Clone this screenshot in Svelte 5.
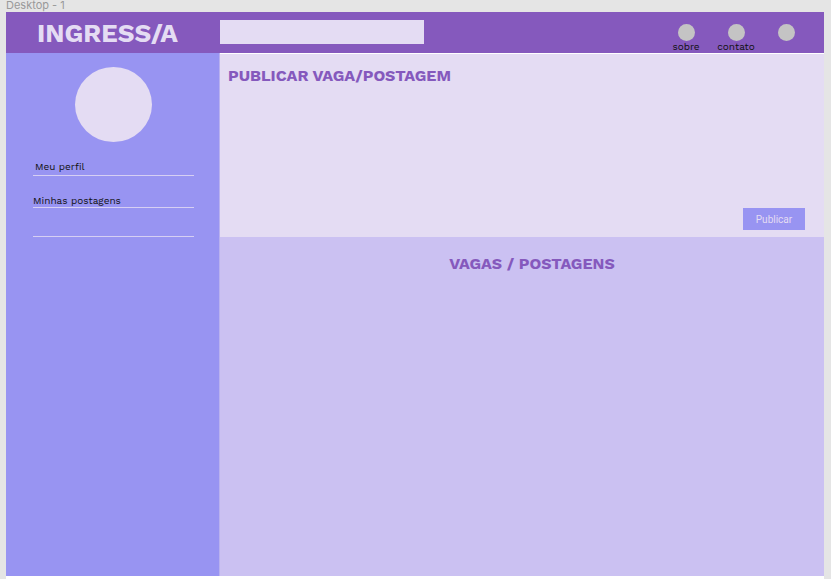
<script>
  let query = $state('');
</script>

<div class="canvas">
  <div class="frame-name">Desktop - 1</div>
  <div class="frame">
    <header>
      <h1>INGRESS/A</h1>
      <input class="search" type="search" aria-label="Buscar" bind:value={query} />
      <nav class="top-nav">
        <a href="#sobre"><span class="dot"></span>sobre</a>
        <a href="#contato"><span class="dot"></span>contato</a>
        <a href="#conta" aria-label="Conta"><span class="dot"></span></a>
      </nav>
    </header>
    <div class="body">
      <aside>
        <div class="avatar"></div>
        <nav class="menu">
          <a class="profile" href="#perfil">Meu perfil</a>
          <a class="posts" href="#postagens">Minhas postagens</a>
          <div class="blank"></div>
        </nav>
      </aside>
      <main>
        <section class="publish">
          <h2>PUBLICAR VAGA/POSTAGEM</h2>
          <button type="button">Publicar</button>
        </section>
        <section class="feed">
          <h2>VAGAS / POSTAGENS</h2>
        </section>
      </main>
    </div>
  </div>
</div>

<style>
  :global(body) {
    margin: 0;
    background: #e5e5e5;
  }
  .canvas {
    box-sizing: border-box;
    min-height: 100vh;
    padding: 0 7px 0 6px;
    display: flex;
    flex-direction: column;
    font-family: "Work Sans", Inter, "Liberation Sans", sans-serif;
    font-size: 10px;
    line-height: 12px;
    color: #111;
  }
  .frame-name {
    height: 12px;
    font-family: Inter, sans-serif;
    font-size: 11px;
    line-height: 10px;
    color: #999;
  }
  .frame {
    flex: 1;
    display: flex;
    flex-direction: column;
    background: #fff;
    padding-bottom: 3px;
  }
  h1,
  h2 {
    margin: 0;
    font-weight: 700;
  }
  header {
    box-sizing: border-box;
    height: 41px;
    display: flex;
    align-items: flex-start;
    padding: 8px 13px 0 0;
    background: #8559bd;
  }
  h1 {
    box-sizing: border-box;
    width: 214px;
    padding-left: 31px;
    font-size: 26px;
    line-height: 26px;
    color: #e4dcf3;
  }
  .search {
    box-sizing: border-box;
    width: 25%;
    min-width: 204px;
    height: 24px;
    margin: 0;
    padding: 0 8px;
    border: 0;
    border-radius: 0;
    background: #e4dcf3;
    font: inherit;
  }
  .top-nav {
    margin-left: auto;
    display: grid;
    grid-template-columns: repeat(3, 50px);
    padding-top: 4px;
  }
  a {
    color: inherit;
    text-decoration: none;
  }
  .top-nav a {
    display: flex;
    flex-direction: column;
    align-items: center;
  }
  .dot {
    width: 17px;
    height: 17px;
    border-radius: 50%;
    background: #c4c4c4;
  }
  .body {
    flex: 1;
    display: flex;
  }
  aside {
    box-sizing: border-box;
    width: 213px;
    padding: 14px 25px 0 27px;
    background: #9894f2;
  }
  .avatar {
    width: 77px;
    height: 75px;
    margin: 0 auto;
    border-radius: 50%;
    background: #e4dcf3;
  }
  .menu {
    display: flex;
    flex-direction: column;
    padding-top: 19px;
  }
  .menu a,
  .blank {
    border-bottom: 1px solid #d6cff3;
  }
  .profile {
    padding: 0 2px 2px;
  }
  .posts {
    padding-top: 19px;
  }
  .blank {
    height: 28px;
  }
  main {
    flex: 1;
    display: flex;
    flex-direction: column;
    padding-top: 1px;
    margin-left: 1px;
    box-shadow: -1px 0 #b9b1ef;
  }
  h2 {
    font-size: 16px;
    line-height: 20px;
    color: #8559bd;
  }
  .publish {
    box-sizing: border-box;
    height: 183px;
    display: flex;
    flex-direction: column;
    justify-content: space-between;
    padding: 12px 19px 7px 8px;
    background: #e4dcf3;
  }
  button {
    align-self: flex-end;
    width: 62px;
    height: 22px;
    padding: 0;
    border: 0;
    background: #9894f2;
    color: #e4dcf3;
    font-family: Roboto, sans-serif;
    font-size: 10px;
  }
  .feed {
    flex: 1;
    padding: 17px 0 0 20px;
    background: #cbc1f2;
    text-align: center;
  }
</style>
